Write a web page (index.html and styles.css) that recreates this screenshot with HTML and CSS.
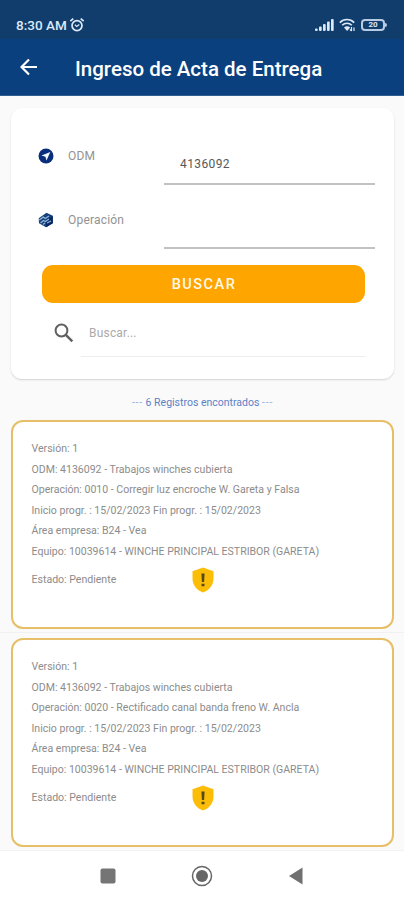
FILE: index.html
```html
<!DOCTYPE html>
<html lang="es">
<head>
<meta charset="utf-8">
<meta name="viewport" content="width=device-width, initial-scale=1">
<title>Ingreso de Acta de Entrega</title>
<link rel="stylesheet" href="styles.css">
</head>
<body>
<div class="screen">
  <div class="status">
    <span class="time">8:30 AM</span>
    <svg class="alarm" viewBox="0 0 16 16" fill="none" stroke="currentColor"><circle cx="8" cy="8.6" r="5" stroke-width="1.7"/><path d="M1.3 4.2 4.3 1.7M11.7 1.7l3 2.5" stroke-width="1.7"/><path d="m5.8 7.8 2 1.7 2.5-2" stroke-width="1.3"/></svg>
    <div class="indicators">
      <svg class="signal" viewBox="0 0 20 12" fill="currentColor"><rect x="0" y="9.5" width="2.7" height="2.5" rx="1"/><rect x="4" y="7.5" width="2.7" height="4.5" rx="1"/><rect x="8" y="5" width="2.7" height="7" rx="1"/><rect x="12" y="2.5" width="2.7" height="9.5" rx="1"/><rect x="16" y="0" width="2.7" height="12" rx="1"/></svg>
      <svg class="wifi" viewBox="0 0 17 14" fill="none" stroke="currentColor" stroke-width="1.6"><path d="M.8 4.600C4.800.5 11.200.5 15.200 4.600M3.200 7.300c2.700-2.700 6.900-2.700 9.600 0"/><path d="M5 9.500c1.800-1.700 4.400-1.700 6.200 0L8.100 12.900z" fill="currentColor" stroke="none"/><path d="M12.500 9v4M11 11.500l1.500 1.500M15 13V9.500" stroke-width="1.200"/></svg>
      <div class="battery"><span>20</span></div>
    </div>
  </div>
  <header class="appbar">
    <svg class="back" viewBox="0 0 18 18" fill="none" stroke="currentColor" stroke-width="2.200"><path d="M17 9H2M9 1.500 1.500 9 9 16.500"/></svg>
    <h1>Ingreso de Acta de Entrega</h1>
  </header>
  <main>
    <section class="form">
      <div class="field">
        <svg class="ficon" viewBox="0 0 16 16"><circle cx="8" cy="8" r="7.500" fill="#092f7c"/><path d="M12.300 4 3.500 7.600l3.900 1.100 1.100 3.700z" fill="#f4f8ff"/></svg>
        <label>ODM</label>
        <div class="input">4136092</div>
      </div>
      <div class="field">
        <svg class="ficon" viewBox="0 0 16 16"><path d="m8.500.8 6.300 3v7.500L8 15.200l-7-3.900-.3-5z" fill="#16417e"/><path d="m8 8 .2 7.200 6.600-3.900V4z" fill="#092765"/><path d="m1.300 8 4-3 2 1.500L11 4M2.500 11l3-2.500 2 1 3.500-2.500M9 11l4-2M5 12.500l2-1.500" fill="none" stroke="#91b7d7" stroke-width="1.300"/></svg>
        <label>Operación</label>
        <div class="input"></div>
      </div>
      <button class="submit">BUSCAR</button>
      <div class="search">
        <svg class="glass" viewBox="0 0 20 20" fill="none" stroke="#606060"><circle cx="7.500" cy="7.500" r="5.900" stroke-width="2"/><path d="m11.800 11.800 6.500 6.500" stroke-width="2.500"/></svg>
        <div class="query">Buscar...</div>
      </div>
    </section>
    <p class="count"><span class="dash">---</span> 6 Registros encontrados <span class="dash">---</span></p>
    <article class="record">
      <p>Versión: 1</p>
      <p>ODM: 4136092 - Trabajos winches cubierta</p>
      <p>Operación: 0010 - Corregir luz encroche W. Gareta y Falsa</p>
      <p>Inicio progr. : 15/02/2023 Fin progr. : 15/02/2023</p>
      <p>Área empresa: B24 - Vea</p>
      <p>Equipo: 10039614 - WINCHE PRINCIPAL ESTRIBOR (GARETA)</p>
      <div class="state"><span>Estado: Pendiente</span><svg class="shield" viewBox="0 0 22 26"><path d="M11 .5 21.500 4.300v7.200c0 6.500-4.500 12-10.500 14C5 23.500.5 18 .5 11.500V4.300z" fill="#fcbd08"/><path d="M9.400 6.500h3.200l-.5 8.500H9.900zM9.500 16.700h3v2.600h-3z" fill="#574817"/></svg></div>
    </article>
    <hr class="divider">
    <article class="record">
      <p>Versión: 1</p>
      <p>ODM: 4136092 - Trabajos winches cubierta</p>
      <p>Operación: 0020 - Rectificado canal banda freno W. Ancla</p>
      <p>Inicio progr. : 15/02/2023 Fin progr. : 15/02/2023</p>
      <p>Área empresa: B24 - Vea</p>
      <p>Equipo: 10039614 - WINCHE PRINCIPAL ESTRIBOR (GARETA)</p>
      <div class="state"><span>Estado: Pendiente</span><svg class="shield" viewBox="0 0 22 26"><path d="M11 .5 21.500 4.300v7.200c0 6.500-4.500 12-10.500 14C5 23.500.5 18 .5 11.500V4.300z" fill="#fcbd08"/><path d="M9.400 6.500h3.200l-.5 8.500H9.900zM9.500 16.700h3v2.600h-3z" fill="#574817"/></svg></div>
    </article>
  </main>
  <nav class="navbar">
    <svg viewBox="0 0 22 22"><rect x="3.500" y="3.500" width="15" height="15" rx="2" fill="#757575"/></svg>
    <svg viewBox="0 0 22 22"><circle cx="11" cy="11" r="9.500" fill="none" stroke="#666" stroke-width="1.500"/><circle cx="11" cy="11" r="6" fill="#666"/></svg>
    <svg viewBox="0 0 22 22"><path d="M17.500 2.500v17L4 11z" fill="#707070"/></svg>
  </nav>
</div>
</body>
</html>
```
FILE: styles.css
```css
* { box-sizing: border-box; }
body { margin: 0; font-family: Roboto, "Liberation Sans", sans-serif; }
h1, p { margin: 0; }
svg { display: block; flex: none; }
.screen { width: 404px; height: 900px; display: flex; flex-direction: column; overflow: hidden; background: #fafafa; }

.status { flex: none; height: 39px; padding: 10px 17px 0 16px; display: flex; align-items: center; background: #113d6d; color: #dce9f8; }
.time { font-size: 13.5px; font-weight: 500; letter-spacing: 0; width: 52px; white-space: nowrap; }
.alarm { width: 16px; height: 16px; margin-left: 1px; }
.indicators { margin-left: auto; display: flex; align-items: center; gap: 4px; }
.signal { width: 20px; height: 12px; }
.wifi { width: 17px; height: 14px; }
.battery { width: 24px; height: 12px; margin: 0 2px 0 1px; border: 2px solid #b8cbe2; border-radius: 4px; font-size: 8px; line-height: 8px; font-weight: 700; text-align: center; position: relative; }
.battery::after { content: ""; position: absolute; right: -4px; top: 2px; width: 2px; height: 4px; border-radius: 0 2px 2px 0; background: #b8cbe2; }

.appbar { flex: none; height: 57px; padding: 3px 0 0 20px; display: flex; align-items: center; background: #0b407e; color: #fff; border-bottom: 1px solid #315f94; }
.back { width: 18px; height: 18px; margin-top: -3px; }
.appbar h1 { margin-left: 37px; font-size: 20.5px; line-height: 26px; font-weight: 500; white-space: nowrap; }

main { flex: 1; min-height: 0; padding: 12px 10px 0 11px; }
.form { height: 271px; padding: 20px 19px 0 27px; background: #fff; border-radius: 11px; box-shadow: 0 1px 2px rgba(0, 0, 0, .16); }
.field { height: 57px; display: flex; margin-bottom: 7px; color: #929292; font-size: 12px; }
.ficon { width: 16px; height: 16px; margin-top: 20px; }
.field label { width: 96px; margin: 20px 0 0 14px; line-height: 16px; letter-spacing: .2px; }
.input { width: 211px; padding: 29px 0 0 16px; line-height: 15px; border-bottom: 2px solid #c2c2c2; color: #575757; letter-spacing: .4px; }
.submit { display: block; width: 323px; height: 38px; margin: 16px 0 0 4px; padding: 1px 0 0 1px; border: 0; border-radius: 11px; background: #ffa500; color: #fff9e9; font: 500 14.5px Roboto, sans-serif; letter-spacing: 1.5px; }
.search { height: 54px; padding-left: 16px; display: flex; }
.glass { width: 20px; height: 20px; margin-top: 20px; }
.query { width: 285px; margin-left: 7px; padding: 22px 0 0 8px; border-bottom: 1px solid #eee; color: #aaa; font-size: 12px; line-height: 16px; letter-spacing: .2px; }
.count { height: 41px; padding-top: 16px; text-align: center; color: #5d7fc6; font-size: 10.5px; line-height: 16px; }
.dash { color: #9bb1dc; letter-spacing: .8px; }

.record { height: 209px; padding: 17px 18px 0 18.5px; border: 2px solid #e6bf68; border-radius: 12px; background: #fff; color: #8c8c8c; font-size: 10.55px; line-height: 20.5px; white-space: nowrap; }
.record p { height: 20.5px; }
.divider { height: 1px; margin: 3px -10px 5px -11px; border: 0; background: #f1f1f1; }
.state { display: grid; grid-template-columns: 160.5px 22px; align-items: center; height: 36px; }
.shield { width: 22px; height: 26px; }

.navbar { height: 50px; flex: none; display: grid; grid-template-columns: repeat(3, 22px); justify-content: center; align-items: center; gap: 72px; background: #fff; border-top: 1px solid #f3f3f3; }
.navbar svg { width: 22px; height: 22px; }
```
